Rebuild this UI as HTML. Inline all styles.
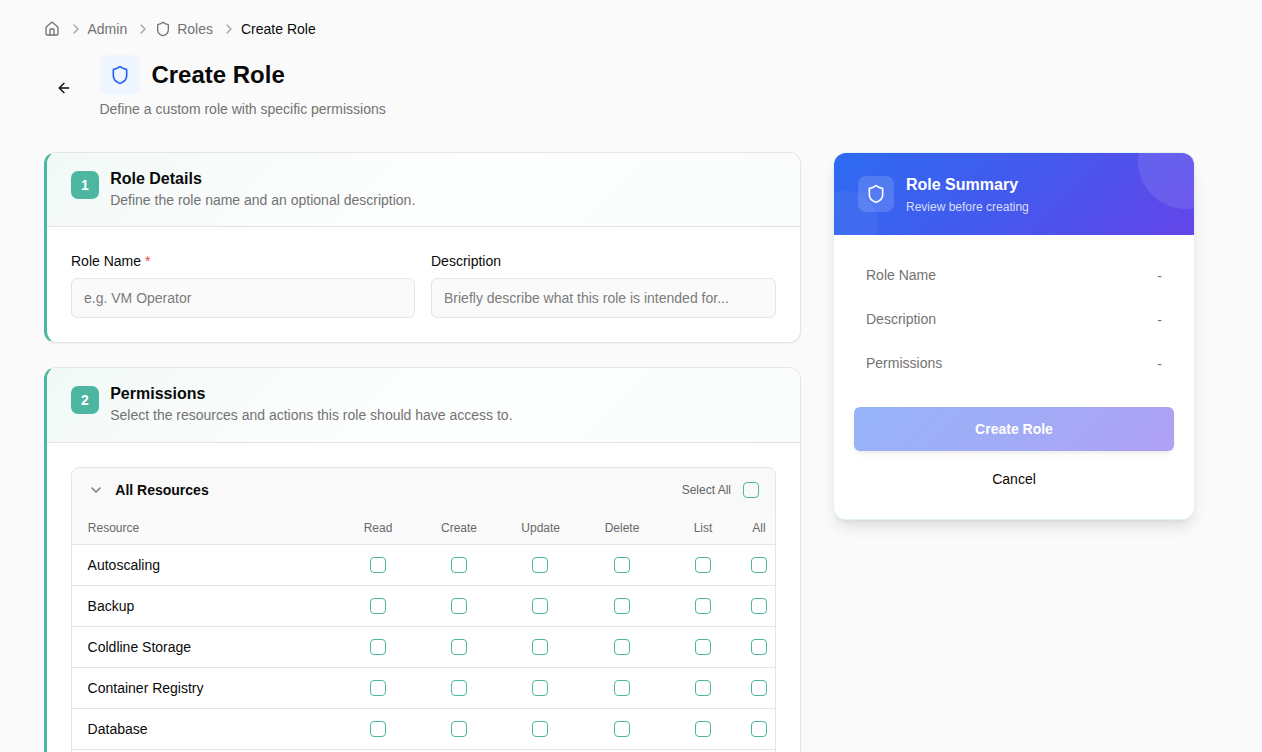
<!DOCTYPE html>
<html lang="en">
<head>
<meta charset="utf-8">
<title>Create Role</title>
<style>
*{box-sizing:border-box;margin:0;padding:0}
html,body{width:1262px;height:752px;overflow:hidden}
body{background:#fafafa;font-family:"Liberation Sans",sans-serif;color:#0a0a0a;position:relative}
svg{display:block}
.abs{position:absolute}
.crumbs{position:absolute;left:44px;top:19px;height:20px;display:flex;align-items:center;font-size:14px;color:#737373;white-space:nowrap}
.crumbs .sep{margin:0 4px 0 8px}
.crumbs .cur{color:#0a0a0a}
.back{position:absolute;left:56px;top:80px}
.hicon{position:absolute;left:100px;top:55px;width:40px;height:40px;border-radius:8px;background:#eff6ff;display:flex;align-items:center;justify-content:center}
h1{position:absolute;left:151.4px;top:60px;font-size:24px;line-height:30px;font-weight:700;letter-spacing:0;white-space:nowrap}
.sub{position:absolute;left:99.4px;top:100px;font-size:14px;line-height:18px;color:#737373;white-space:nowrap}
.card{position:absolute;left:44px;width:757px;background:#fff;border:1px solid #e5e5e5;border-left:3px solid #4db6a0;border-radius:12px;overflow:hidden;box-shadow:0 1px 2px rgba(0,0,0,.05)}
.chead{height:74px;border-bottom:1px solid #e5e5e5;background:linear-gradient(135deg,#f1f9f7 0%,#f7fbfa 20%,#fdfefe 50%,#fdfefe 60%,#f9fcfb 100%);position:relative}
.num{position:absolute;left:24px;top:18px;width:28px;height:28px;border-radius:7px;background:#4db6a0;color:#fff;font-size:14px;font-weight:700;display:flex;align-items:center;justify-content:center}
.ctitle{position:absolute;left:63.2px;top:16px;font-size:16px;line-height:20px;font-weight:700;white-space:nowrap}
.cdesc{position:absolute;left:63.2px;top:38px;font-size:14px;line-height:18px;color:#737373;white-space:nowrap}
.lbl{position:absolute;font-size:14px;line-height:18px;white-space:nowrap}
.inp{position:absolute;height:40px;border:1px solid #e5e5e5;border-radius:6px;background:#fafafa;font-size:14px;line-height:38px;padding-left:12px;color:#7c7c7c;white-space:nowrap}

.tbl{position:absolute;left:24px;top:99px;width:705px;height:330px;border:1px solid #e5e5e5;border-radius:8px 8px 0 0;overflow:hidden;background:#fff}
.thead{position:absolute;left:0;top:0;width:100%;height:44px;background:#f9f9f9}
.thead .chev{position:absolute;left:16px;top:14px}
.thead .ttl{position:absolute;left:43.3px;top:13px;font-size:14px;line-height:18px;font-weight:700;white-space:nowrap}
.thead .sa{position:absolute;right:44px;top:14px;font-size:12px;line-height:16px;color:#636363;white-space:nowrap}
.cols{position:absolute;left:0;top:44px;width:100%;height:33px;background:#fafafa;border-bottom:1px solid #e5e5e5;font-size:12px;color:#696969}
.cols span{position:absolute;top:9px;line-height:14px;white-space:nowrap;transform:translateX(-50%)}
.row{position:absolute;left:0;width:100%;height:41px;border-bottom:1px solid #e5e5e5;font-size:14px}
.row .nm{position:absolute;left:15.6px;top:11px;line-height:18px;white-space:nowrap}
.cb{position:absolute;width:16px;height:16px;border:1px solid #4db6a0;border-radius:4px;background:#fff}
.row .cb{top:12px}
.sum{position:absolute;left:833px;top:152px;width:362px;height:368px;background:#fff;border:1px solid rgba(77,182,160,.16);border-radius:13px;box-shadow:0 10px 15px -3px rgba(0,0,0,.1),0 4px 6px -4px rgba(0,0,0,.1);overflow:hidden}
.shead{position:absolute;left:0;top:0;width:360px;height:82px;background:linear-gradient(135deg,#2d6bf2 0%,#4459ed 50%,#6445e9 100%);overflow:hidden}
.shead .c1{position:absolute;left:304px;top:-40px;width:96px;height:96px;border-radius:50%;background:rgba(255,255,255,.1)}
.shead .c2{position:absolute;left:-20px;top:38px;width:64px;height:64px;border-radius:50%;background:rgba(255,255,255,.05)}
.sicon{position:absolute;left:24px;top:23px;width:36px;height:36px;border-radius:8px;background:rgba(255,255,255,.15);display:flex;align-items:center;justify-content:center}
.stitle{position:absolute;left:72px;top:22px;font-size:16px;line-height:20px;font-weight:700;color:#fff;white-space:nowrap}
.ssub{position:absolute;left:72px;top:46px;font-size:12px;line-height:16px;color:rgba(255,255,255,.8);white-space:nowrap}
.srow{position:absolute;left:32px;width:296px;font-size:14px;line-height:18px;color:#737373;white-space:nowrap}
.srow b{position:absolute;right:0;top:1px;font-weight:400;color:#737373}
.btn{position:absolute;left:20px;top:254px;width:320px;height:44px;border-radius:6px;background:linear-gradient(135deg,#96b4f8 0%,#a1abf6 50%,#b0a0f4 100%);color:#fff;font-size:14px;font-weight:700;display:flex;align-items:center;justify-content:center;box-shadow:0 4px 6px -1px rgba(0,0,0,.06),0 2px 4px -2px rgba(0,0,0,.06)}
.cancel{position:absolute;left:20px;top:317px;width:320px;text-align:center;font-size:14px;line-height:18px;color:#0a0a0a}
</style>
</head>
<body>
<div class="crumbs">
<svg width="16" height="16" viewBox="0 0 24 24" fill="none" stroke="#737373" stroke-width="2" stroke-linecap="round" stroke-linejoin="round"><path d="M15 21v-8a1 1 0 0 0-1-1h-4a1 1 0 0 0-1 1v8"/><path d="M3 10a2 2 0 0 1 .709-1.528l7-5.999a2 2 0 0 1 2.582 0l7 5.999A2 2 0 0 1 21 10v9a2 2 0 0 1-2 2H5a2 2 0 0 1-2-2z"/></svg>
<svg class="sep" width="16" height="16" viewBox="0 0 24 24" fill="none" stroke="#a3a3a3" stroke-width="2" stroke-linecap="round" stroke-linejoin="round"><path d="m9 18 6-6-6-6"/></svg>
<span style="margin-left:-.5px">Admin</span>
<svg class="sep" width="16" height="16" viewBox="0 0 24 24" fill="none" stroke="#a3a3a3" stroke-width="2" stroke-linecap="round" stroke-linejoin="round"><path d="m9 18 6-6-6-6"/></svg>
<svg width="16" height="16" viewBox="0 0 24 24" fill="none" stroke="#737373" stroke-width="2" stroke-linecap="round" stroke-linejoin="round" style="margin-right:6px"><path d="M20 13c0 5-3.5 7.5-7.66 8.95a1 1 0 0 1-.67-.01C7.5 20.5 4 18 4 13V6a1 1 0 0 1 1-1c2 0 4.5-1.2 6.24-2.72a1.17 1.17 0 0 1 1.52 0C14.51 3.81 17 5 19 5a1 1 0 0 1 1 1z"/></svg>
<span>Roles</span>
<svg class="sep" width="16" height="16" viewBox="0 0 24 24" fill="none" stroke="#a3a3a3" stroke-width="2" stroke-linecap="round" stroke-linejoin="round"><path d="m9 18 6-6-6-6"/></svg>
<span class="cur">Create Role</span>
</div>

<div class="back"><svg width="16" height="16" viewBox="0 0 24 24" fill="none" stroke="#0a0a0a" stroke-width="2" stroke-linecap="round" stroke-linejoin="round"><path d="m12 19-7-7 7-7"/><path d="M19 12H5"/></svg></div>
<div class="hicon"><svg width="20" height="20" viewBox="0 0 24 24" fill="none" stroke="#2563eb" stroke-width="2" stroke-linecap="round" stroke-linejoin="round"><path d="M20 13c0 5-3.500 7.500-7.660 8.950a1 1 0 0 1-.670-.010C7.500 20.500 4 18 4 13V6a1 1 0 0 1 1-1c2 0 4.500-1.200 6.240-2.720a1.170 1.170 0 0 1 1.520 0C14.510 3.810 17 5 19 5a1 1 0 0 1 1 1z"/></svg></div>
<h1>Create Role</h1>
<div class="sub">Define a custom role with specific permissions</div>

<div class="card" id="c1" style="top:152px;height:191px">
  <div class="chead">
    <div class="num">1</div>
    <div class="ctitle">Role Details</div>
    <div class="cdesc">Define the role name and an optional description.</div>
  </div>
  <div class="lbl" style="left:24px;top:99px">Role Name <span style="color:#ef4444">*</span></div>
  <div class="inp" style="left:24px;top:125px;width:344px">e.g. VM Operator</div>
  <div class="lbl" style="left:384px;top:99px">Description</div>
  <div class="inp" style="left:384px;top:125px;width:345px">Briefly describe what this role is intended for...</div>
</div>

<div class="card" id="c2" style="top:367px;height:420px;border-bottom-left-radius:0;border-bottom-right-radius:0">
  <div class="chead" style="height:75px">
    <div class="num">2</div>
    <div class="ctitle">Permissions</div>
    <div class="cdesc">Select the resources and actions this role should have access to.</div>
  </div>
<div class="tbl">
<div class="thead"><svg class="chev" width="16" height="16" viewBox="0 0 24 24" fill="none" stroke="#707070" stroke-width="2" stroke-linecap="round" stroke-linejoin="round"><path d="m6 9 6 6 6-6"/></svg><span class="ttl">All Resources</span><span class="sa">Select All</span><i class="cb" style="left:671px;top:14px;background:transparent"></i></div>
<div class="cols"><span style="transform:none;left:15.8px">Resource</span><span style="left:306px">Read</span><span style="left:387px">Create</span><span style="left:468.7px">Update</span><span style="left:550px">Delete</span><span style="left:631px">List</span><span style="left:687px">All</span></div>
<div class="row" style="top:77px"><span class="nm">Autoscaling</span><i class="cb" style="left:298px"></i><i class="cb" style="left:379px"></i><i class="cb" style="left:460px"></i><i class="cb" style="left:542px"></i><i class="cb" style="left:623px"></i><i class="cb" style="left:679px"></i></div>
<div class="row" style="top:118px"><span class="nm">Backup</span><i class="cb" style="left:298px"></i><i class="cb" style="left:379px"></i><i class="cb" style="left:460px"></i><i class="cb" style="left:542px"></i><i class="cb" style="left:623px"></i><i class="cb" style="left:679px"></i></div>
<div class="row" style="top:159px"><span class="nm">Coldline Storage</span><i class="cb" style="left:298px"></i><i class="cb" style="left:379px"></i><i class="cb" style="left:460px"></i><i class="cb" style="left:542px"></i><i class="cb" style="left:623px"></i><i class="cb" style="left:679px"></i></div>
<div class="row" style="top:200px"><span class="nm">Container Registry</span><i class="cb" style="left:298px"></i><i class="cb" style="left:379px"></i><i class="cb" style="left:460px"></i><i class="cb" style="left:542px"></i><i class="cb" style="left:623px"></i><i class="cb" style="left:679px"></i></div>
<div class="row" style="top:241px"><span class="nm">Database</span><i class="cb" style="left:298px"></i><i class="cb" style="left:379px"></i><i class="cb" style="left:460px"></i><i class="cb" style="left:542px"></i><i class="cb" style="left:623px"></i><i class="cb" style="left:679px"></i></div>
</div>
</div>

<div class="sum">
  <div class="shead"><div class="c1"></div><div class="c2"></div>
    <div class="sicon"><svg width="20" height="20" viewBox="0 0 24 24" fill="none" stroke="#fff" stroke-width="2" stroke-linecap="round" stroke-linejoin="round"><path d="M20 13c0 5-3.500 7.500-7.660 8.950a1 1 0 0 1-.670-.010C7.500 20.500 4 18 4 13V6a1 1 0 0 1 1-1c2 0 4.500-1.200 6.240-2.720a1.170 1.170 0 0 1 1.520 0C14.510 3.810 17 5 19 5a1 1 0 0 1 1 1z"/></svg></div>
    <div class="stitle">Role Summary</div>
    <div class="ssub">Review before creating</div>
  </div>
  <div class="srow" style="top:113px">Role Name<b>-</b></div>
  <div class="srow" style="top:157px">Description<b>-</b></div>
  <div class="srow" style="top:201px">Permissions<b>-</b></div>
  <div class="btn">Create Role</div>
  <div class="cancel">Cancel</div>
</div>
</body>
</html>
